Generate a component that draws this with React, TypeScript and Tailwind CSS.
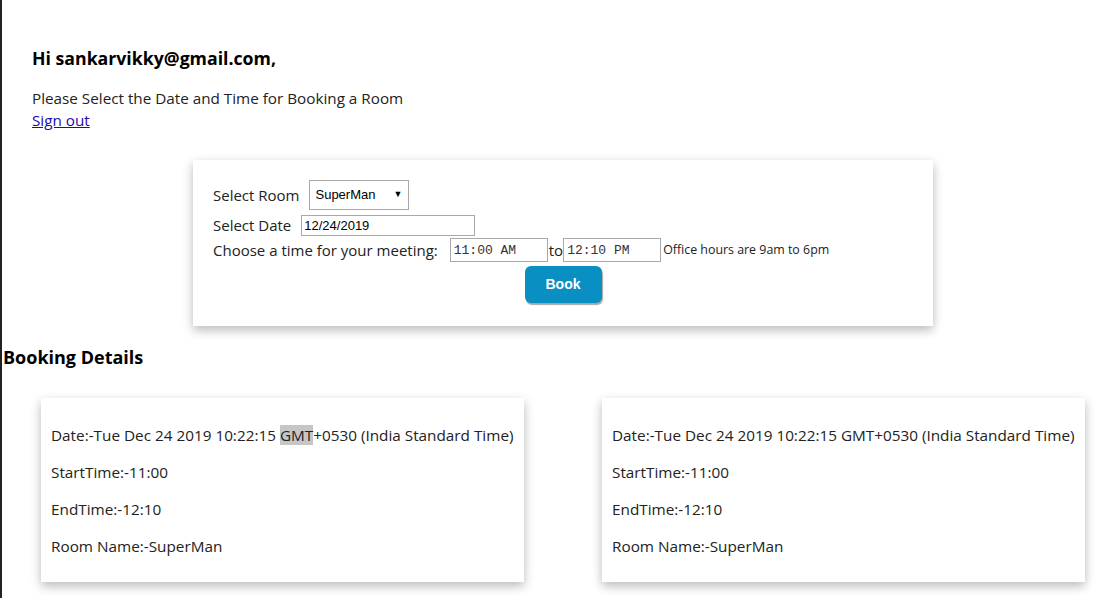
import React from 'react';

const bookings = [
  { date: 'Tue Dec 24 2019 10:22:15', highlight: true, start: '11:00', end: '12:10', room: 'SuperMan' },
  { date: 'Tue Dec 24 2019 10:22:15', highlight: false, start: '11:00', end: '12:10', room: 'SuperMan' },
];

function BookingCard({ b }: { b: (typeof bookings)[number] }) {
  return (
    <div className="w-[483px] h-[184px] bg-white shadow-[0_4px_10px_rgba(0,0,0,0.28)] px-[10px] pt-[27px] flex flex-col gap-[16px] text-[15.3px] leading-[21px] text-[#222] whitespace-nowrap">
      <p>
        Date:-{b.date}{' '}
        {b.highlight ? <span className="bg-[#c6c6c6]">GMT</span> : 'GMT'}
        +0530 (India Standard Time)
      </p>
      <p>StartTime:-{b.start}</p>
      <p>EndTime:-{b.end}</p>
      <p>Room Name:-{b.room}</p>
    </div>
  );
}

export default function App() {
  return (
    <div
      className="w-[1104px] h-[598px] overflow-hidden bg-white border-l-2 border-[#222] text-black"
      style={{ fontFamily: '"Open Sans", "Noto Sans", sans-serif' }}
    >
      <div className="pl-[30px] pt-[46px]">
        <h2 className="text-[17.7px] font-bold leading-[24px]">Hi sankarvikky@gmail.com,</h2>
        <p className="mt-[18px] text-[15.25px] leading-[21px] text-[#222]">Please Select the Date and Time for Booking a Room</p>
        <a href="#" className="block w-fit text-[15.25px] leading-[22px] text-[#1a0dab] underline">Sign out</a>
      </div>

      {/* booking form */}
      <div className="ml-[191px] mt-[29px] w-[740px] h-[166px] bg-white shadow-[0_4px_10px_rgba(0,0,0,0.28)] pl-[20px] pt-[20px] text-[15px] text-[#222]">
        <div className="flex items-center h-[30px]">
          <span>Select Room</span>
          <div className="ml-[10px] w-[100px] h-[30px] border border-[#a9a9a9] flex items-center justify-between px-[5px] text-[13px] text-black" style={{ fontFamily: '"Liberation Sans", Arial, sans-serif' }}>
            <span>SuperMan</span>
            <span className="text-[9px] mr-[1px]">▼</span>
          </div>
        </div>
        <div className="flex items-center h-[23px] mt-[4px]">
          <span>Select Date</span>
          <input
            readOnly
            value="12/24/2019"
            className="ml-[10px] w-[174px] h-[21px] border border-[#a9a9a9] px-[2px] text-[13px] text-black outline-none"
            style={{ fontFamily: '"Liberation Sans", Arial, sans-serif' }}
          />
        </div>
        <div className="flex items-center h-[24px] mt-[1px]">
          <span>Choose a time for your meeting:</span>
          <input
            readOnly
            value="11:00 AM"
            className="ml-[12px] w-[98px] h-[24px] border border-[#a9a9a9] px-[3px] text-[13px] text-[#333] outline-none"
            style={{ fontFamily: '"Liberation Mono", monospace' }}
          />
          <span className="ml-[1px]">to</span>
          <input
            readOnly
            value="12:10 PM"
            className="w-[98px] h-[24px] border border-[#a9a9a9] px-[3px] text-[13px] text-[#333] outline-none"
            style={{ fontFamily: '"Liberation Mono", monospace' }}
          />
          <span className="ml-[2px] text-[12.4px]">Office hours are 9am to 6pm</span>
        </div>
        <div className="flex justify-center pr-[20px] mt-[4px]">
          <button
            type="button"
            className="w-[77px] h-[37px] rounded-[6px] bg-[#0a8fc2] text-white text-[14px] font-bold shadow-[1px_2px_1px_rgba(0,0,0,0.35)]"
            style={{ fontFamily: '"Liberation Sans", Arial, sans-serif' }}
          >
            Book
          </button>
        </div>
      </div>

      <h3 className="mt-[19px] ml-[1px] text-[18px] font-bold leading-[24px]">Booking Details</h3>

      <div className="flex gap-[78px] ml-[39px] mt-[29px]">
        {bookings.map((b, i) => (
          <BookingCard key={i} b={b} />
        ))}
      </div>
    </div>
  );
}
